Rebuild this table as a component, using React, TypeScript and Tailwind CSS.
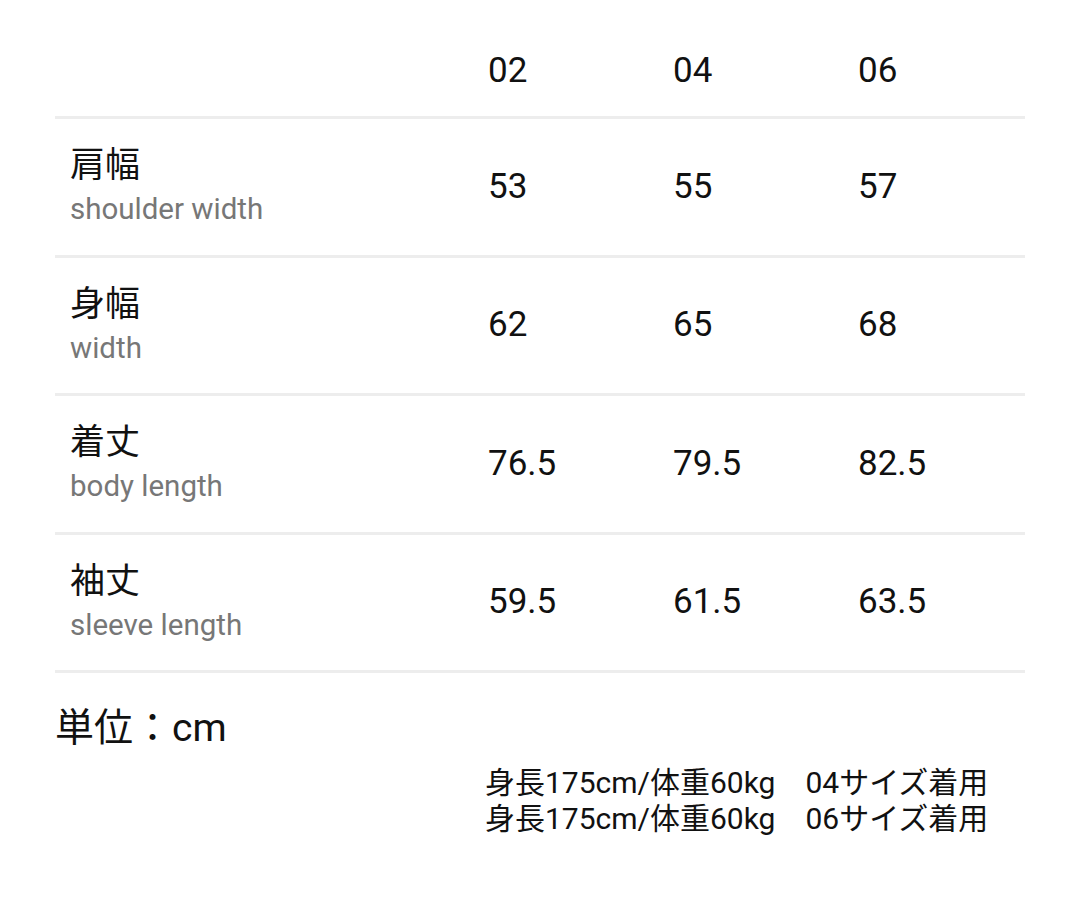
const rows = [
  { ja: "肩幅", en: "shoulder width", values: ["53", "55", "57"] },
  { ja: "身幅", en: "width", values: ["62", "65", "68"] },
  { ja: "着丈", en: "body length", values: ["76.5", "79.5", "82.5"] },
  { ja: "袖丈", en: "sleeve length", values: ["59.5", "61.5", "63.5"] },
];

const sizes = ["02", "04", "06"];

export default function App() {
  return (
    <div className="min-h-[900px] w-[1080px] bg-white font-['Roboto','Noto_Sans_CJK_JP',sans-serif] text-[#111]">
      <div className="px-[55px] pt-[26px]">
        <div className="flex h-[93px] items-center border-b-[3px] border-[#ededed]">
          <div className="w-[433px] shrink-0" />
          {sizes.map((s) => (
            <div key={s} className="w-[185px] shrink-0 text-[35px] leading-[42px]">
              {s}
            </div>
          ))}
        </div>

        {rows.map((r) => (
          <div
            key={r.ja}
            className="flex h-[138.5px] items-center border-b-[3px] border-[#ededed]"
          >
            <div className="w-[433px] shrink-0 pl-[15px]">
              <div className="text-[35px] leading-[42px]">{r.ja}</div>
              <div className="text-[29.5px] leading-[38px] text-[#777] mt-[3px]">{r.en}</div>
            </div>
            {r.values.map((v, i) => (
              <div key={i} className="w-[185px] shrink-0 text-[35px] leading-[42px]">
                {v}
              </div>
            ))}
          </div>
        ))}

        <div className="mt-[34px] text-[39px] leading-[42px]">単位：cm</div>

        <div className="mt-[16px] pl-[430px] text-[30px] leading-[36px] whitespace-pre">
          <div>身長175cm/体重60kg　04サイズ着用</div>
          <div>身長175cm/体重60kg　06サイズ着用</div>
        </div>
      </div>
    </div>
  );
}
